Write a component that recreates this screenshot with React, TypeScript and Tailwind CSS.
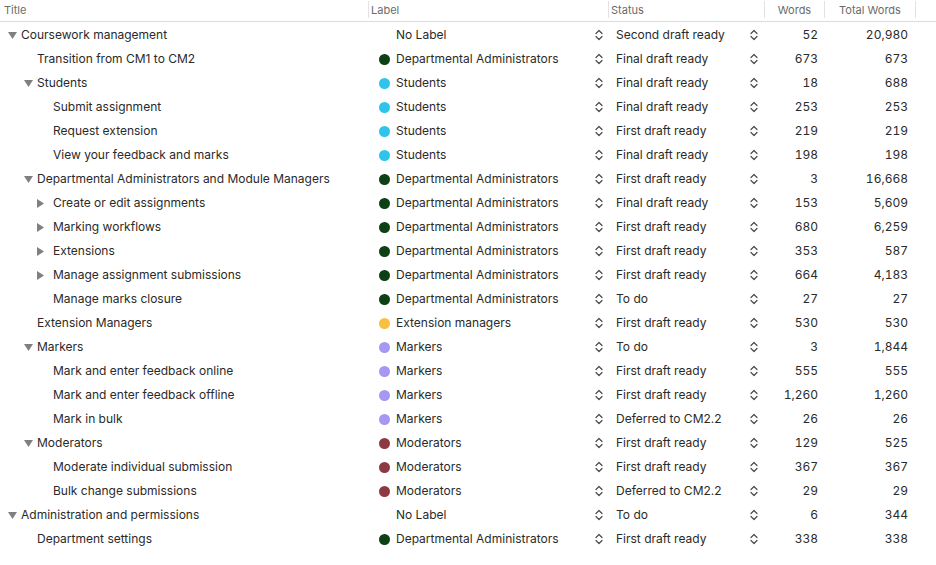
import React from "react";

type Row = {
  title: string;
  level: number;
  toggle?: "open" | "closed";
  label: string;
  status: string;
  words: string;
  total: string;
};

const dotColors: Record<string, string> = {
  "Departmental Administrators": "bg-[#0f3f14]",
  Students: "bg-[#2fc3ea]",
  "Extension managers": "bg-[#f6c143]",
  Markers: "bg-[#a797f2]",
  Moderators: "bg-[#8b3a44]",
};

const DA = "Departmental Administrators";

const rows: Row[] = [
  { title: "Coursework management", level: 0, toggle: "open", label: "No Label", status: "Second draft ready", words: "52", total: "20,980" },
  { title: "Transition from CM1 to CM2", level: 1, label: DA, status: "Final draft ready", words: "673", total: "673" },
  { title: "Students", level: 1, toggle: "open", label: "Students", status: "Final draft ready", words: "18", total: "688" },
  { title: "Submit assignment", level: 2, label: "Students", status: "Final draft ready", words: "253", total: "253" },
  { title: "Request extension", level: 2, label: "Students", status: "First draft ready", words: "219", total: "219" },
  { title: "View your feedback and marks", level: 2, label: "Students", status: "Final draft ready", words: "198", total: "198" },
  { title: "Departmental Administrators and Module Managers", level: 1, toggle: "open", label: DA, status: "First draft ready", words: "3", total: "16,668" },
  { title: "Create or edit assignments", level: 2, toggle: "closed", label: DA, status: "Final draft ready", words: "153", total: "5,609" },
  { title: "Marking workflows", level: 2, toggle: "closed", label: DA, status: "First draft ready", words: "680", total: "6,259" },
  { title: "Extensions", level: 2, toggle: "closed", label: DA, status: "First draft ready", words: "353", total: "587" },
  { title: "Manage assignment submissions", level: 2, toggle: "closed", label: DA, status: "First draft ready", words: "664", total: "4,183" },
  { title: "Manage marks closure", level: 2, label: DA, status: "To do", words: "27", total: "27" },
  { title: "Extension Managers", level: 1, label: "Extension managers", status: "First draft ready", words: "530", total: "530" },
  { title: "Markers", level: 1, toggle: "open", label: "Markers", status: "To do", words: "3", total: "1,844" },
  { title: "Mark and enter feedback online", level: 2, label: "Markers", status: "First draft ready", words: "555", total: "555" },
  { title: "Mark and enter feedback offline", level: 2, label: "Markers", status: "First draft ready", words: "1,260", total: "1,260" },
  { title: "Mark in bulk", level: 2, label: "Markers", status: "Deferred to CM2.2", words: "26", total: "26" },
  { title: "Moderators", level: 1, toggle: "open", label: "Moderators", status: "First draft ready", words: "129", total: "525" },
  { title: "Moderate individual submission", level: 2, label: "Moderators", status: "First draft ready", words: "367", total: "367" },
  { title: "Bulk change submissions", level: 2, label: "Moderators", status: "Deferred to CM2.2", words: "29", total: "29" },
  { title: "Administration and permissions", level: 0, toggle: "open", label: "No Label", status: "To do", words: "6", total: "344" },
  { title: "Department settings", level: 1, label: DA, status: "First draft ready", words: "338", total: "338" },
];

const indent = ["pl-[5px]", "pl-[21px]", "pl-[37px]"];

function Chevrons() {
  return (
    <svg width="8" height="12" viewBox="0 0 8 12" className="shrink-0">
      <path d="M1 4.5 L4 1.5 L7 4.5 M1 7.5 L4 10.5 L7 7.5" fill="none" stroke="#4a4a4a" strokeWidth="1.2" strokeLinecap="round" strokeLinejoin="round" />
    </svg>
  );
}

function Toggle({ kind }: { kind?: "open" | "closed" }) {
  return (
    <span className="flex w-4 shrink-0 items-center">
      {kind === "open" && (
        <svg width="9" height="7" viewBox="0 0 9 7" className="ml-[3px]">
          <path d="M0 0 H9 L4.5 7 Z" fill="#808080" />
        </svg>
      )}
      {kind === "closed" && (
        <svg width="7" height="9" viewBox="0 0 7 9">
          <path d="M0 0 V9 L7 4.5 Z" fill="#808080" />
        </svg>
      )}
    </span>
  );
}

function HeaderCell({ children, sep = true, className = "" }: { children?: React.ReactNode; sep?: boolean; className?: string }) {
  return (
    <div className="flex h-full items-start">
      {sep && <div className="mt-[1px] h-[17px] w-px shrink-0 bg-[#e2e2e2]" />}
      <div className={`flex h-[20px] flex-1 items-center ${className}`}>{children}</div>
    </div>
  );
}

const cols = "grid grid-cols-[368px_240px_156px_60px_91px_1fr]";

export default function App() {
  return (
    <div className="h-[565px] w-[936px] overflow-hidden bg-white text-[12px] text-[#2a2a2a]" style={{ fontFamily: "Inter, 'Noto Sans', sans-serif" }}>
      {/* Header */}
      <div className={`${cols} h-[22px] border-b border-[#dcdcdc] text-[11px] text-[#6b6b6b]`}>
        <HeaderCell sep={false} className="pl-[4px]">Title</HeaderCell>
        <HeaderCell className="pl-[2px]">Label</HeaderCell>
        <HeaderCell className="pl-[2px]">Status</HeaderCell>
        <HeaderCell className="justify-center">Words</HeaderCell>
        <HeaderCell className="justify-center">Total Words</HeaderCell>
        <HeaderCell />
      </div>

      {/* Rows */}
      <div className="pt-px">
        {rows.map((r, i) => (
          <div key={i} className={`${cols} h-6 items-center`}>
            <div className={`flex items-center ${indent[r.level]}`}>
              <Toggle kind={r.toggle} />
              <span className="whitespace-nowrap">{r.title}</span>
            </div>
            <div className="flex items-center pl-[11px] pr-[5px]">
              <span className={`h-[11px] w-[11px] shrink-0 rounded-full ${dotColors[r.label] ?? ""}`} />
              <span className="ml-[6px] flex-1 whitespace-nowrap">{r.label}</span>
              <Chevrons />
            </div>
            <div className="flex items-center pl-[8px] pr-[6px]">
              <span className="flex-1 whitespace-nowrap">{r.status}</span>
              <Chevrons />
            </div>
            <div className="-mt-px pr-[6px] text-right tabular-nums">{r.words}</div>
            <div className="-mt-px pr-[7px] text-right tabular-nums">{r.total}</div>
            <div />
          </div>
        ))}
      </div>
    </div>
  );
}
